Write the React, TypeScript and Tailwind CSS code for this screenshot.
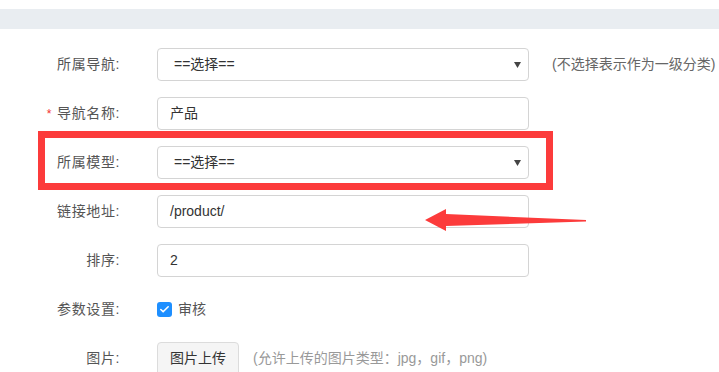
import { Check } from "lucide-react";

const Label = ({ text, required }: { text: string; required?: boolean }) => (
  <div className="w-[120px] shrink-0 text-right text-[14px] tracking-[0.6px] text-[#555]">
    {required && <span className="mr-[5px] text-[12px] text-[#f23030]">*</span>}
    {text}
  </div>
);

const Select = ({ value }: { value: string }) => (
  <div className="ml-[37px] flex h-[33px] w-[372px] items-center justify-between rounded-[4px] border border-[#d4d4d4] bg-white pl-[16px] pr-[7px] text-[14px] text-[#333]">
    <span>{value}</span>
    <svg width="7" height="6" viewBox="0 0 7 6">
      <polygon points="0,0 7,0 3.5,6" fill="#444" />
    </svg>
  </div>
);

const Input = ({ value }: { value: string }) => (
  <div className="ml-[37px] flex h-[33px] w-[372px] items-center rounded-[4px] border border-[#d4d4d4] bg-white px-[12px] text-[14px] text-[#333]">
    {value}
  </div>
);

export default function App() {
  return (
    <div className="relative h-[372px] w-[719px] overflow-hidden bg-white font-['Liberation_Sans','Noto_Sans_CJK_SC',sans-serif]">
      <div className="mt-[9px] h-[20px] bg-[#e9edf1]" />

      <div className="mt-[19px] flex flex-col gap-[16px]">
        <div className="flex h-[33px] items-center">
          <Label text="所属导航:" />
          <Select value="==选择==" />
          <span className="ml-[23px] whitespace-nowrap text-[14px] text-[#666]">(不选择表示作为一级分类)</span>
        </div>

        <div className="flex h-[33px] items-center">
          <Label text="导航名称:" required />
          <Input value="产品" />
        </div>

        <div className="flex h-[33px] items-center">
          <Label text="所属模型:" />
          <Select value="==选择==" />
        </div>

        <div className="flex h-[33px] items-center">
          <Label text="链接地址:" />
          <Input value="/product/" />
        </div>

        <div className="flex h-[33px] items-center">
          <Label text="排序:" />
          <Input value="2" />
        </div>

        <div className="flex h-[33px] items-center">
          <Label text="参数设置:" />
          <div className="ml-[37px] flex items-center">
            <span className="flex h-[15px] w-[15px] items-center justify-center rounded-[3px] bg-[#1e8fff]">
              <Check size={11} strokeWidth={3.5} color="#fff" />
            </span>
            <span className="ml-[6px] text-[14px] text-[#555]">审核</span>
          </div>
        </div>

        <div className="flex h-[33px] items-center">
          <Label text="图片:" />
          <div className="ml-[37px] flex items-center">
            <button className="h-[34px] rounded-[4px] border border-[#dcdcdc] bg-[#f5f5f5] px-[12px] text-[14px] text-[#333]">
              图片上传
            </button>
            <span className="ml-[14px] whitespace-nowrap text-[14px] text-[#999]">
              (允许上传的图片类型：jpg，gif，png)
            </span>
          </div>
        </div>
      </div>

      {/* annotation box + arrow */}
      <div className="absolute left-[38px] top-[131px] h-[59px] w-[515px] border-[7px] border-[#fc3b3b]" />
      <svg className="absolute left-0 top-0" width="719" height="372" viewBox="0 0 719 372">
        <polygon
          points="425,220 446,209 446,214 586,220 586,221.5 446,226 446,231"
          fill="#fc3b3b"
        />
      </svg>
    </div>
  );
}
